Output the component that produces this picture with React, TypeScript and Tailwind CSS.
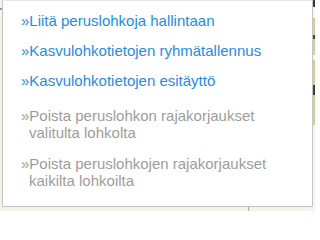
import React from "react";

const blueItems = [
  "Liitä peruslohkoja hallintaan",
  "Kasvulohkotietojen ryhmätallennus",
  "Kasvulohkotietojen esitäyttö",
];

const grayItems = [
  "Poista peruslohkon rajakorjaukset valitulta lohkolta",
  "Poista peruslohkojen rajakorjaukset kaikilta lohkoilta",
];

export default function App() {
  return (
    <div
      className="w-[315px] h-[211px] overflow-hidden bg-[#eef5ea] flex flex-col"
      style={{ fontFamily: '"Liberation Sans", Arial, sans-serif' }}
    >
      <div className="flex h-[207px]">
        {/* left backdrop strip */}
        <div className="w-[2px] flex flex-col">
          <div className="h-[8px]" />
          <div className="h-[2px] bg-[#9a9a9a]" />
        </div>
        {/* popup panel */}
        <div className="w-[311px] h-[207px] bg-white border border-[#c6c6c6] border-t-[#e6e6e6]">
          <div className="pt-[11px] pl-[26px] pr-2 text-[15px] leading-[17px]">
            <div className="flex flex-col gap-[13px] text-[#1f8ce6]">
              {blueItems.map((t) => (
                <div key={t} className="indent-[-8px]">
                  »{t}
                </div>
              ))}
            </div>
            <div className="flex flex-col gap-[14px] mt-[18px] text-[#9d9d9d] pr-[30px]">
              {grayItems.map((t) => (
                <div key={t} className="indent-[-8px]">
                  »{t}
                </div>
              ))}
            </div>
          </div>
        </div>
        {/* right map strip */}
        <div className="w-[2px] flex flex-col">
          <div className="h-[7px] bg-[#3a3a3a]" />
          <div className="h-[11px] bg-[#f4f4f0]" />
          <div className="h-[17px] bg-[#d9cc98]" />
          <div className="h-[4px] bg-[#4a4438]" />
          <div className="h-[16px] bg-[#d9cc98]" />
          <div className="h-[5px] bg-[#f4f4f0]" />
          <div className="h-[25px] bg-[#d9cc98]" />
          <div className="h-[10px] bg-[#3f3a30]" />
          <div className="h-[30px] bg-[#d9cc98]" />
          <div className="flex-1 bg-[#f2f5ee]" />
        </div>
      </div>
      <div className="flex-1 flex">
        <div className="ml-[248px] w-px bg-[#a8a8a8]" />
      </div>
    </div>
  );
}
